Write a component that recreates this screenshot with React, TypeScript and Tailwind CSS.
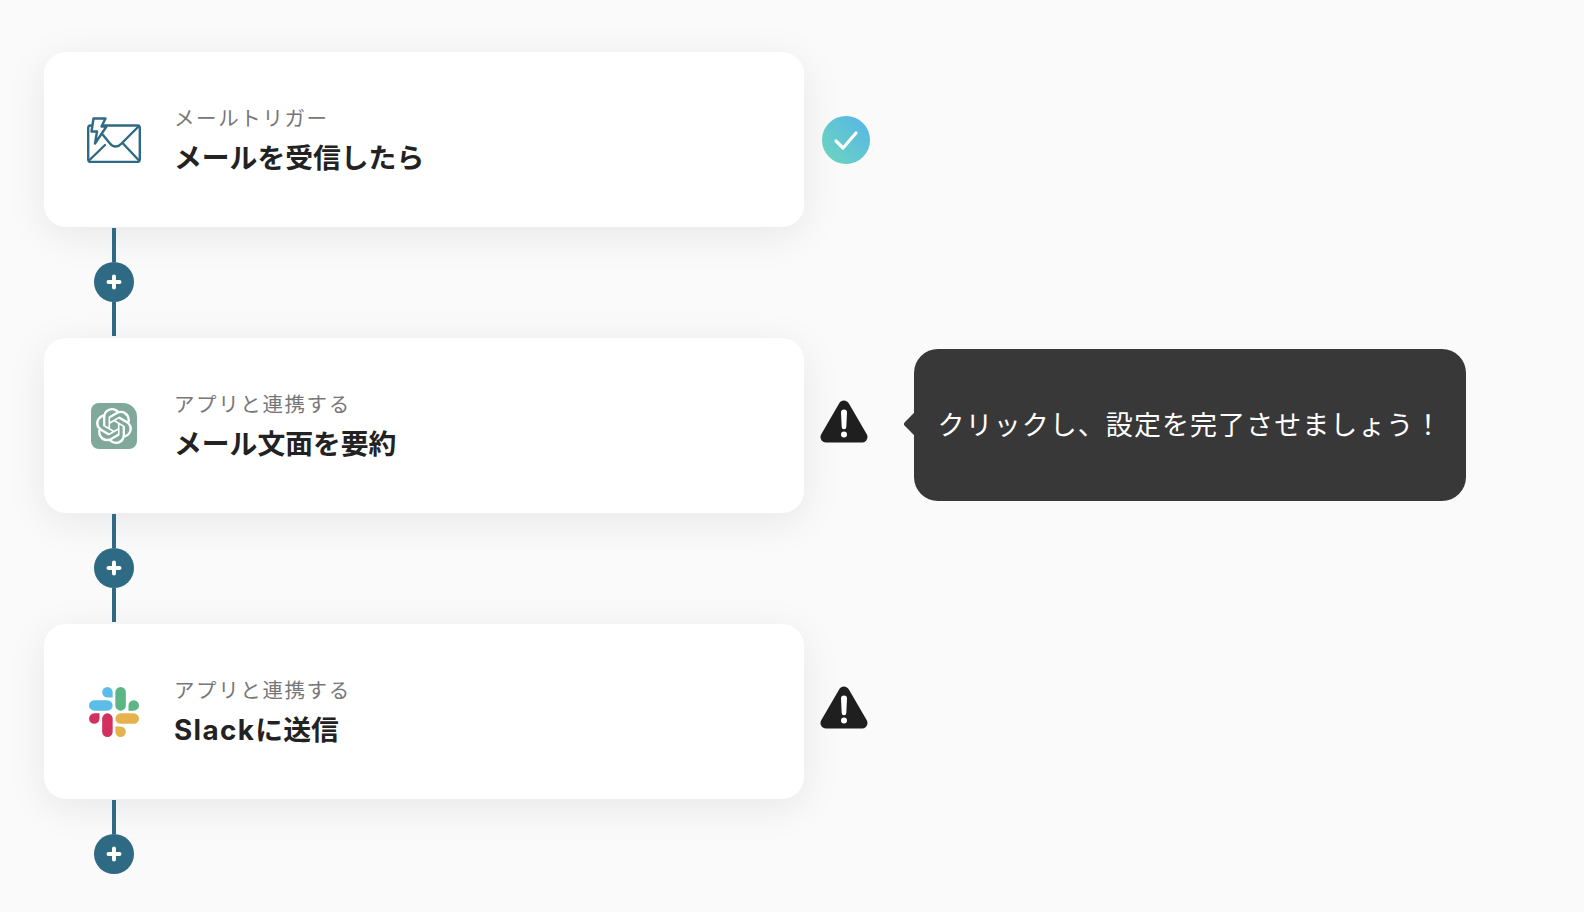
const OPENAI_PATH =
  "M22.2819 9.8211a5.9847 5.9847 0 0 0-.5157-4.9108 6.0462 6.0462 0 0 0-6.5098-2.9A6.0651 6.0651 0 0 0 4.9807 4.1818a5.9847 5.9847 0 0 0-3.9977 2.9 6.0462 6.0462 0 0 0 .7427 7.0966 5.98 5.98 0 0 0 .511 4.9107 6.051 6.051 0 0 0 6.5146 2.9001A5.9847 5.9847 0 0 0 13.2599 24a6.0557 6.0557 0 0 0 5.7718-4.2058 5.9894 5.9894 0 0 0 3.9977-2.9001 6.0557 6.0557 0 0 0-.7475-7.0729zm-9.022 12.6081a4.4755 4.4755 0 0 1-2.8764-1.0408l.1419-.0804 4.7783-2.7582a.7948.7948 0 0 0 .3927-.6813v-6.7369l2.02 1.1686a.071.071 0 0 1 .038.052v5.5826a4.504 4.504 0 0 1-4.4945 4.4944zm-9.6607-4.1254a4.4708 4.4708 0 0 1-.5346-3.0137l.142.0852 4.783 2.7582a.7712.7712 0 0 0 .7806 0l5.8428-3.3685v2.3324a.0804.0804 0 0 1-.0332.0615L9.74 19.9502a4.4992 4.4992 0 0 1-6.1408-1.6464zM2.3408 7.8956a4.485 4.485 0 0 1 2.3655-1.9728V11.6a.7664.7664 0 0 0 .3879.6765l5.8144 3.3543-2.0201 1.1685a.0757.0757 0 0 1-.071 0l-4.8303-2.7865A4.504 4.504 0 0 1 2.3408 7.872zm16.5963 3.8558L13.1038 8.364 15.1192 7.2a.0757.0757 0 0 1 .071 0l4.8303 2.7913a4.4944 4.4944 0 0 1-.6765 8.1042v-5.6772a.79.79 0 0 0-.407-.667zm2.0107-3.0231l-.142-.0852-4.7735-2.7818a.7759.7759 0 0 0-.7854 0L9.409 9.2297V6.8974a.0662.0662 0 0 1 .0284-.0615l4.8303-2.7866a4.4992 4.4992 0 0 1 6.6802 4.66zM8.3065 12.863l-2.02-1.1638a.0804.0804 0 0 1-.038-.0567V6.0742a4.4992 4.4992 0 0 1 7.3757-3.4537l-.142.0805L8.704 5.459a.7948.7948 0 0 0-.3927.6813zm1.0976-2.3654l2.602-1.4998 2.6069 1.4998v2.9994l-2.5974 1.4997-2.6067-1.4997Z";

function MailIcon() {
  return (
    <svg width="54" height="46" viewBox="0 0 54 46" fill="none" stroke="#2f6a85" strokeWidth="2.400" strokeLinejoin="round" strokeLinecap="round">
      <path d="M6 8.500H3.500A2.500 2.500 0 0 0 1.200 11v31.500A2.500 2.500 0 0 0 3.500 45h47a2.500 2.500 0 0 0 2.300-2.500V11a2.500 2.500 0 0 0-2.300-2.500H17" />
      <path d="M16 18l7 8.500c3 4 8 4 11 .5L51.500 9.500" />
      <path d="M2 43.500 18 28M52 43.500 36 26.500" />
      <path d="M6.500 1.500H18.500L14.500 9.500H19.500L8 26.500 10 14.500H4.500L6.500 1.500z" fill="#fff" />
    </svg>
  );
}

function GptIcon() {
  return (
    <div className="w-[46px] h-[46px] rounded-tl-lg rounded-bl-lg rounded-br-lg rounded-tr-[14px] bg-[#80a99b] flex items-center justify-center">
      <svg width="36" height="36" viewBox="0 0 24 24" fill="#fff">
        <path d={OPENAI_PATH} />
      </svg>
    </div>
  );
}

function SlackIcon() {
  return (
    <svg width="50" height="50" viewBox="0 0 24 24">
      <path fill="#d2315f" d="M5.042 15.165a2.528 2.528 0 0 1-2.52 2.523A2.528 2.528 0 0 1 0 15.165a2.527 2.527 0 0 1 2.522-2.52h2.52v2.52zM6.313 15.165a2.527 2.527 0 0 1 2.521-2.52 2.527 2.527 0 0 1 2.521 2.52v6.313A2.528 2.528 0 0 1 8.834 24a2.528 2.528 0 0 1-2.521-2.522v-6.313z" />
      <path fill="#5cbde8" d="M8.834 5.042a2.528 2.528 0 0 1-2.521-2.52A2.528 2.528 0 0 1 8.834 0a2.528 2.528 0 0 1 2.521 2.522v2.52H8.834zM8.834 6.313a2.528 2.528 0 0 1 2.521 2.521 2.528 2.528 0 0 1-2.521 2.521H2.522A2.528 2.528 0 0 1 0 8.834a2.528 2.528 0 0 1 2.522-2.521h6.312z" />
      <path fill="#5cb585" d="M18.956 8.834a2.528 2.528 0 0 1 2.522-2.521A2.528 2.528 0 0 1 24 8.834a2.528 2.528 0 0 1-2.522 2.521h-2.522V8.834zM17.688 8.834a2.528 2.528 0 0 1-2.523 2.521 2.527 2.527 0 0 1-2.52-2.521V2.522A2.527 2.527 0 0 1 15.165 0a2.528 2.528 0 0 1 2.523 2.522v6.312z" />
      <path fill="#e5b24d" d="M15.165 18.956a2.528 2.528 0 0 1 2.523 2.522A2.528 2.528 0 0 1 15.165 24a2.527 2.527 0 0 1-2.52-2.522v-2.522h2.52zM15.165 17.688a2.527 2.527 0 0 1-2.52-2.523 2.526 2.526 0 0 1 2.52-2.52h6.313A2.527 2.527 0 0 1 24 15.165a2.528 2.528 0 0 1-2.522 2.523h-6.313z" />
    </svg>
  );
}

function DoneBadge() {
  return (
    <div className="ml-[18px] mt-[2px] w-[48px] h-[48px] rounded-full bg-gradient-to-tr from-[#6fd6b8] to-[#56b4ea] flex items-center justify-center">
      <svg className="mt-[1px]" width="26" height="22" viewBox="0 0 26 22" fill="none" stroke="#fff" strokeWidth="3.200" strokeLinecap="round" strokeLinejoin="round">
        <path d="M3 11l7 7L23 3" />
      </svg>
    </div>
  );
}

function WarnBadge() {
  return (
    <div className="ml-[16px] mb-[6px] w-[48px] h-[48px] flex items-center justify-center">
      <svg width="48" height="46" viewBox="0 0 48 46">
        <path d="M24 7 6 38h36L24 7z" fill="#1f1f1f" stroke="#1f1f1f" strokeWidth="11" strokeLinejoin="round" />
        <path d="M21 13.500a3 3 0 0 1 6 0L26.300 28a2.300 2.300 0 0 1-4.600 0L21 13.500z" fill="#fff" />
        <circle cx="24" cy="35.500" r="3" fill="#fff" />
      </svg>
    </div>
  );
}

function Connector({ last }: { last?: boolean }) {
  return (
    <div className="w-[760px] pl-[48px] py-[2px]">
      <div className="w-[44px] flex flex-col items-center">
        <div className="w-[4px] h-[34px] bg-[#2f6a85]" />
        <div className="w-[40px] h-[40px] rounded-full bg-[#2f6a85] flex items-center justify-center">
          <svg width="16" height="16" viewBox="0 0 16 16" stroke="#fff" strokeWidth="4" strokeLinecap="round">
            <path d="M8 2.500v11M2.500 8h11" />
          </svg>
        </div>
        {!last && <div className="w-[4px] h-[34px] bg-[#2f6a85]" />}
      </div>
    </div>
  );
}

function StepCard({ icon, label, children }: { icon: React.ReactNode; label: string; children: React.ReactNode }) {
  return (
    <div className="w-[760px] h-[175px] -mb-[1px] shrink-0 rounded-[22px] bg-white shadow-[0_8px_40px_rgba(0,0,0,0.08)] flex items-center pl-[40px]">
      <div className="w-[60px] flex justify-center">{icon}</div>
      <div className="ml-[30px] flex flex-col">
        <span className="mt-[2px] text-[20.500px] leading-[30px] tracking-[1.600px] text-[#777777]">{label}</span>
        <span className="mt-[5px] text-[27.800px] leading-[38px] font-bold text-[#222222]">{children}</span>
      </div>
    </div>
  );
}

export default function App() {
  return (
    <div
      className="min-h-[912px] bg-[#fafafa] pl-[44px] pt-[52px] overflow-hidden"
      style={{ fontFamily: 'Inter, "Noto Sans CJK JP", sans-serif' }}
    >
      <div className="flex items-center">
        <StepCard icon={<MailIcon />} label="メールトリガー">メールを受信したら</StepCard>
        <DoneBadge />
      </div>
      <Connector />
      <div className="flex items-center">
        <StepCard icon={<GptIcon />} label="アプリと連携する">メール文面を要約</StepCard>
        <WarnBadge />
        <div className="relative ml-[46px] w-[552px] h-[152px] rounded-[24px] bg-[#383838] flex items-center justify-center">
          <div className="absolute left-[-7px] top-[65px] w-[20px] h-[20px] rotate-45 rounded-[3px] bg-[#383838]" />
          <span className="relative mt-[2px] text-[27px] tracking-[1.050px] text-white whitespace-nowrap">クリックし、設定を完了させましょう！</span>
        </div>
      </div>
      <Connector />
      <div className="flex items-center">
        <StepCard icon={<SlackIcon />} label="アプリと連携する">
          <span className="tracking-[1.400px]">Slack</span>に送信
        </StepCard>
        <WarnBadge />
      </div>
      <Connector last />
    </div>
  );
}
